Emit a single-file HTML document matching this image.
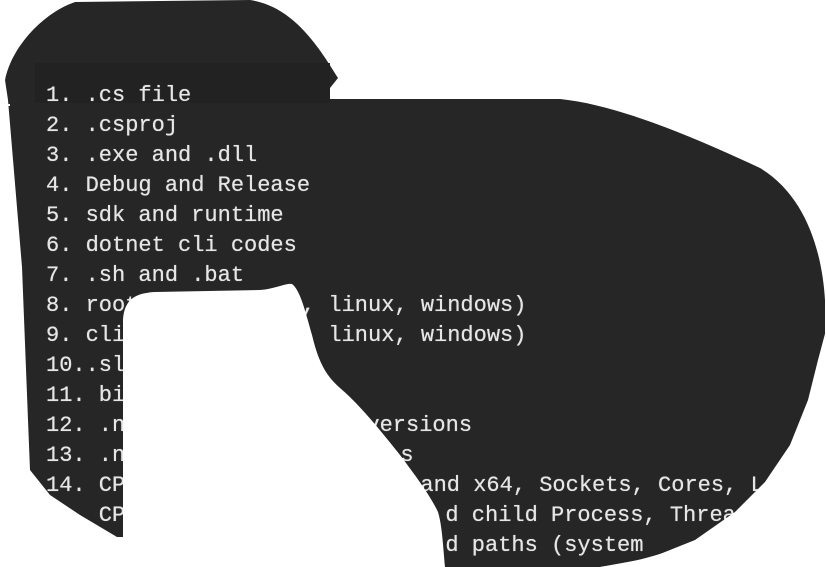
<!DOCTYPE html>
<html><head><meta charset="utf-8"><style>
html,body{margin:0;padding:0;background:#fff;width:826px;height:567px;overflow:hidden}
svg{position:absolute;left:0;top:0}
.t{position:absolute;font-family:"Liberation Mono",monospace;font-size:22px;color:#e6e6e6;white-space:pre;line-height:30px;text-shadow:0 0 0.6px #e6e6e6}
</style></head><body>
<svg width="826" height="567" viewBox="0 0 826 567">
<path fill="#262626" d="M5,80 C12,45 45,12 75,2 L250,0 C290,6 315,40 338,78 L330,88 L330,99 L560,99 C620,105 700,140 760,168 C805,195 822,250 825,300 L825,340 C820,400 790,470 740,512 C700,545 650,560 600,567 L470,567 L20,567 Z"/>
<rect x="35" y="63" width="295" height="40" fill="#222"/>
<rect x="0" y="104" width="10" height="2" fill="#fff"/>
<rect x="0" y="62" width="5" height="8" fill="#c44"/>
</svg>
<div class="t" style="left:46px;top:81px">1. .cs file
2. .csproj
3. .exe and .dll
4. Debug and Release
5. sdk and runtime
6. dotnet cli codes
7. .sh and .bat
8. root
9. cli
10..sln
11. bin
12. .net
13. .net
14. CPU
    CPU</div>
<div class="t" style="left:302px;top:291px">, linux, windows)</div>
<div class="t" style="left:302px;top:321px">, linux, windows)</div>
<div class="t" style="left:340px;top:411px">  versions</div>
<div class="t" style="left:374px;top:441px">  s</div>
<div class="t" style="left:394px;top:471px">  and x64, Sockets, Cores, L</div>
<div class="t" style="left:419px;top:501px">  d child Process, Threads</div>
<div class="t" style="left:419px;top:531px">  d paths (system</div>
<svg width="826" height="567" viewBox="0 0 826 567">
<path fill="#fff" d="M123,537 L123,320 C124,300 135,293 155,292 L260,290 C275,289 285,283 292,284 C300,290 305,310 312,335 C318,360 325,375 340,388 C360,405 380,430 400,455 C415,475 430,495 438,512 C442,525 443,545 445,567 L0,567 L0,537 Z"/>
<path fill="#fff" d="M0,470 L30,470 L50,495 L80,515 L117,537 L0,537 Z"/>
<path fill="#fff" d="M600,567 L650,558 L695,540 L735,512 L765,482 L790,445 L808,400 L818,360 L826,330 L826,567 Z"/>
<path fill="#fff" d="M0,0 L75,0 L75,2 C45,12 12,45 5,80 L8,100 L22,267 L28,420 L30,470 L0,470 Z"/>
</svg>
</body></html>
